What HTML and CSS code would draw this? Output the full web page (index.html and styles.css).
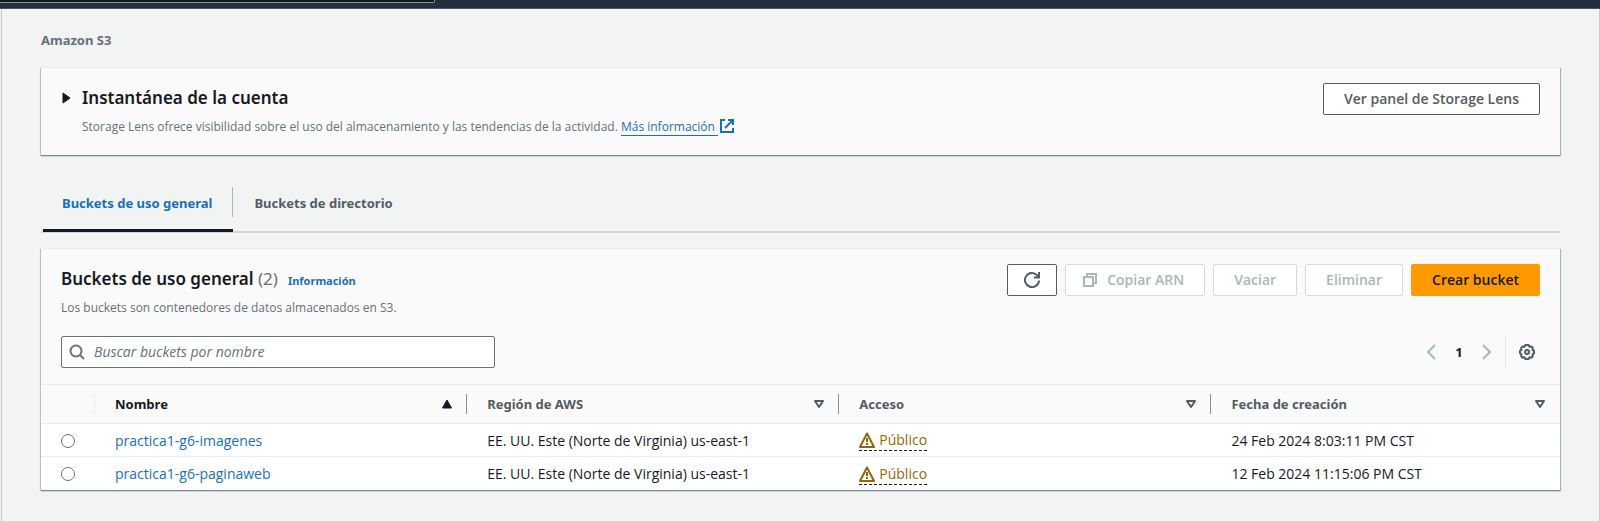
FILE: index.html
```html
<!DOCTYPE html>
<html lang="es">
<head>
<meta charset="utf-8">
<meta name="viewport" content="width=device-width, initial-scale=1">
<title>Amazon S3</title>
<link rel="stylesheet" href="styles.css">
</head>
<body>
<header class="topbar"><div class="topbar-search"></div></header>
<main class="page">
  <nav class="breadcrumb">Amazon S3</nav>

  <section class="card snapshot">
    <svg class="caret" viewBox="0 0 9 12" aria-hidden="true"><path d="M1 1v10l7-5z" fill="#16191f" stroke="#16191f" stroke-linejoin="round"/></svg>
    <div class="snapshot-text">
      <h2 class="title">Instantánea de la cuenta</h2>
      <p class="description">Storage Lens ofrece visibilidad sobre el uso del almacenamiento y las tendencias de la actividad. <a class="more" href="#"><span class="more-label">Más información </span><svg class="external" viewBox="0 0 16 16" aria-hidden="true"><path d="M6 2H2v12h12v-4M9 2h5v5M14 2L6 10" fill="none" stroke="currentColor" stroke-width="2"/></svg></a></p>
    </div>
    <button class="btn" type="button">Ver panel de Storage Lens</button>
  </section>

  <div class="tabs" role="tablist">
    <button class="tab tab-active" type="button" role="tab" aria-selected="true">Buckets de uso general</button>
    <button class="tab" type="button" role="tab" aria-selected="false">Buckets de directorio</button>
  </div>

  <section class="card">
    <div class="card-head">
      <div>
        <div class="title-row">
          <h2 class="title">Buckets de uso general <span class="count">(2)</span></h2>
          <a class="info" href="#">Información</a>
        </div>
        <p class="description">Los buckets son contenedores de datos almacenados en S3.</p>
      </div>
      <div class="actions">
        <button class="btn btn-icon" type="button" aria-label="Actualizar"><svg class="icon" viewBox="0 0 16 16" aria-hidden="true"><path d="M15 8.5A7 7 0 1 1 13.2 3.4L15 5.5M10 5.5h5V0" fill="none" stroke="currentColor" stroke-width="2"/></svg></button>
        <button class="btn btn-copy" type="button" disabled><svg class="icon-copy" viewBox="0 0 14 14" aria-hidden="true"><path d="M1 4h9v9H1zM4 4V1h9v9h-3" fill="none" stroke="currentColor" stroke-width="2"/></svg>Copiar ARN</button>
        <button class="btn" type="button" disabled>Vaciar</button>
        <button class="btn" type="button" disabled>Eliminar</button>
        <button class="btn btn-primary" type="button">Crear bucket</button>
      </div>
    </div>

    <div class="toolbar">
      <label class="search">
        <svg class="icon" viewBox="0 0 16 16" aria-hidden="true"><circle cx="7" cy="7" r="5.5" fill="none" stroke="currentColor" stroke-width="2"/><path d="M10.5 10.5L15 15" stroke="currentColor" stroke-width="2"/></svg>
        <input class="search-input" type="text" placeholder="Buscar buckets por nombre" aria-label="Buscar buckets por nombre">
      </label>
      <div class="pager">
        <button class="plain" type="button" aria-label="Anterior" disabled><svg class="icon" viewBox="0 0 16 16" aria-hidden="true"><path d="M12 1L5 8l7 7" fill="none" stroke="currentColor" stroke-width="2"/></svg></button>
        <span class="page-number">1</span>
        <button class="plain" type="button" aria-label="Siguiente" disabled><svg class="icon" viewBox="0 0 16 16" aria-hidden="true"><path d="M4 1l7 7-7 7" fill="none" stroke="currentColor" stroke-width="2"/></svg></button>
        <div class="settings">
          <button class="plain" type="button" aria-label="Preferencias"><svg class="icon" viewBox="0 0 16 16" aria-hidden="true"><path d="M6.4 1h3.2l.9 1.7 1.9-.3 1.5 1.5-.4 1.9L15 6.6v2.8l-1.5.9.4 1.9-1.5 1.5-1.9-.4L9.6 15H6.4l-.9-1.7-1.9.4-1.5-1.5.4-1.9L1 9.4V6.6l1.5-.8-.4-1.9 1.5-1.5 1.9.3z" fill="none" stroke="currentColor" stroke-width="2" stroke-linejoin="round"/><circle cx="8" cy="8" r="2" fill="none" stroke="currentColor" stroke-width="2"/></svg></button>
        </div>
      </div>
    </div>

    <table class="table">
      <colgroup><col class="col-select"><col class="col-data"><col class="col-data"><col class="col-data"><col></colgroup>
      <thead>
        <tr>
          <th aria-label="Selección"><div class="th"></div></th>
          <th><div class="th th-sorted">Nombre<svg class="sort" viewBox="0 0 10 10" aria-hidden="true"><path d="M5 1L9.5 9h-9z" fill="currentColor" stroke="currentColor" stroke-linejoin="round"/></svg></div></th>
          <th><div class="th">Región de AWS<svg class="sort" viewBox="0 0 10 10" aria-hidden="true"><path d="M1 2h8L5 8z" fill="none" stroke="currentColor" stroke-width="2" stroke-linejoin="round"/></svg></div></th>
          <th><div class="th">Acceso<svg class="sort" viewBox="0 0 10 10" aria-hidden="true"><path d="M1 2h8L5 8z" fill="none" stroke="currentColor" stroke-width="2" stroke-linejoin="round"/></svg></div></th>
          <th><div class="th">Fecha de creación<svg class="sort" viewBox="0 0 10 10" aria-hidden="true"><path d="M1 2h8L5 8z" fill="none" stroke="currentColor" stroke-width="2" stroke-linejoin="round"/></svg></div></th>
        </tr>
      </thead>
      <tbody>
        <tr>
          <td><input class="radio" type="radio" name="bucket" aria-label="practica1-g6-imagenes"></td>
          <td><a class="link" href="#">practica1-g6-imagenes</a></td>
          <td>EE. UU. Este (Norte de Virginia) us-east-1</td>
          <td><span class="status"><svg class="icon" viewBox="0 0 16 16" aria-hidden="true"><path d="M8 1.5L15 15H1z" fill="none" stroke="currentColor" stroke-width="2" stroke-linejoin="round"/><path d="M8 6v4M8 11v2" stroke="currentColor" stroke-width="2"/></svg>Público</span></td>
          <td>24 Feb 2024 8:03:11 PM CST</td>
        </tr>
        <tr>
          <td><input class="radio" type="radio" name="bucket" aria-label="practica1-g6-paginaweb"></td>
          <td><a class="link" href="#">practica1-g6-paginaweb</a></td>
          <td>EE. UU. Este (Norte de Virginia) us-east-1</td>
          <td><span class="status"><svg class="icon" viewBox="0 0 16 16" aria-hidden="true"><path d="M8 1.5L15 15H1z" fill="none" stroke="currentColor" stroke-width="2" stroke-linejoin="round"/><path d="M8 6v4M8 11v2" stroke="currentColor" stroke-width="2"/></svg>Público</span></td>
          <td>12 Feb 2024 11:15:06 PM CST</td>
        </tr>
      </tbody>
    </table>
  </section>
</main>
</body>
</html>
```
FILE: styles.css
```css
* { box-sizing: border-box; }

body {
  margin: 0;
  min-height: 100vh;
  display: flex;
  flex-direction: column;
  background: #f2f4f4;
  color: #16191f;
  font: 13px/20px "Noto Sans", "Open Sans", sans-serif;
}

h2, p { margin: 0; }
a { color: #1a6fb5; text-decoration: none; }
button, input { font: inherit; }

.topbar { height: 9px; background: #232f3e; border-bottom: 1px solid #4b5561; }
.topbar-search {
  width: 435px;
  height: 3px;
  background: #151a22;
  border: solid #8a9096;
  border-width: 0 1px 1px 0;
  border-radius: 0 0 2px 0;
}

.page {
  flex: 1;
  padding: 21px 39px 28px;
  border: solid #c5cccf;
  border-width: 0 1px;
  margin-left: 1px;
}

.breadcrumb { color: #687078; font-weight: 700; margin-bottom: 17px; }

.card {
  background: #fafafa;
  border-top: 1px solid #eaeded;
  box-shadow: 0 1px 1px 0 #7f898d, 1px 1px 1px 0 #b5bcbf, -1px 1px 1px 0 #c5cccf;
}

.snapshot { display: flex; align-items: flex-start; padding: 15px 20px 19px; }
.caret { width: 9px; height: 12px; margin: 9px 11px 0 1px; }
.snapshot-text { flex: 1; }
.title { margin-top: 1px; font-size: 17px; line-height: 28px; font-weight: 600; }
.count { color: #687078; font-weight: 400; }
.description { font-family: "Open Sans", sans-serif; font-size: 12px; line-height: 18px; margin-top: 6px; color: #687078; }
.more-label { border-bottom: 1px solid #1a6fb5; white-space: pre; }
.external { width: 16px; height: 16px; vertical-align: -3px; margin-left: 1px; }

.btn {
  height: 32px;
  padding: 0 20px;
  border: 1px solid #545b64;
  border-radius: 2px;
  background: #fff;
  color: #545b64;
  font: 600 14px/20px "Open Sans", sans-serif;
  white-space: nowrap;
}
.btn:disabled { border-color: #d5dbdb; color: #aab7b8; }
.btn-icon { display: flex; align-items: center; padding: 0 16px; }
.btn-copy { display: flex; align-items: center; gap: 10px; padding: 0 20px 0 17px; }
.btn-primary { background: #ff9900; border-color: #ff9900; color: #16191f; }
.icon { width: 16px; height: 16px; display: block; flex: none; }
.icon-copy { width: 14px; height: 14px; }

.tabs { display: flex; margin: 32px 0 15px; border-bottom: 2px solid #d1d6d8; }
.tab {
  display: flex;
  align-items: center;
  height: 44px;
  padding: 0 21px 12px;
  border: 0;
  background: none;
  color: #545b64;
  font-weight: 700;
}
.tab-active {
  color: #1a6fb5;
  margin: 0 0 -1px 2px;
  height: 45px;
  padding: 0 21px 10px 19px;
  border-bottom: 3px solid #16191f;
  background: linear-gradient(#aab7b8, #aab7b8) right top / 1px 30px no-repeat;
}

.card-head { display: flex; justify-content: space-between; padding: 15px 20px 0; }
.title-row { display: flex; align-items: baseline; gap: 10px; }
.info { font-size: 11px; font-weight: 700; }
.actions { display: flex; gap: 8px; }

.toolbar { display: flex; justify-content: space-between; align-items: center; padding: 19px 20px 16px; }
.search {
  display: flex;
  align-items: center;
  gap: 9px;
  flex: 0 1 434px;
  height: 32px;
  padding: 0 7px;
  border: 1px solid #687078;
  border-radius: 2px;
  background: #fff;
  color: #687078;
}
.search-input { flex: 1; min-width: 0; padding: 0; border: 0; outline: 0; background: none; font: 14px/20px "Open Sans", sans-serif; }
.search-input::placeholder { color: #687078; font-style: italic; opacity: 1; }
.pager { display: flex; align-items: center; color: #545b64; }
.plain { padding: 0; border: 0; background: none; color: inherit; }
.plain:disabled { color: #aab7b8; }
.page-number { width: 40px; text-align: center; font-weight: 700; color: #16191f; }
.settings { display: flex; align-items: center; height: 32px; margin-left: 10px; padding: 0 5px 0 13px; border-left: 1px solid #e4e8e8; }

.table { width: 100%; table-layout: fixed; border-collapse: collapse; }
.col-select { width: 54px; }
.col-data { width: 24.5%; }
.table th { height: 39px; padding: 0; border-top: 1px solid #eaeded; text-align: left; }
.th {
  display: flex;
  align-items: center;
  justify-content: space-between;
  height: 20px;
  padding: 0 14px 0 20px;
  border-right: 1px solid #879196;
  color: #545b64;
}
th:first-child .th { border-color: #eaeded; }
th:last-child .th { border: 0; padding-right: 15px; }
.th-sorted { color: #16191f; }
.sort { width: 10px; height: 10px; }
.table td {
  height: 33px;
  padding: 1px 20px 0;
  border-top: 1px solid #eaeded;
  background: #fff;
  font: 14px/20px "Open Sans", sans-serif;
  white-space: nowrap;
}
.radio {
  display: block;
  appearance: none;
  width: 14px;
  height: 14px;
  margin: 0;
  border: 1px solid #687078;
  border-radius: 50%;
  background: #fff;
}
.status {
  display: inline-flex;
  align-items: center;
  gap: 4px;
  border-bottom: 1px dashed #16191f;
  color: #906806;
  font: 14px/20px "Open Sans", sans-serif;
  vertical-align: middle;
}
```
